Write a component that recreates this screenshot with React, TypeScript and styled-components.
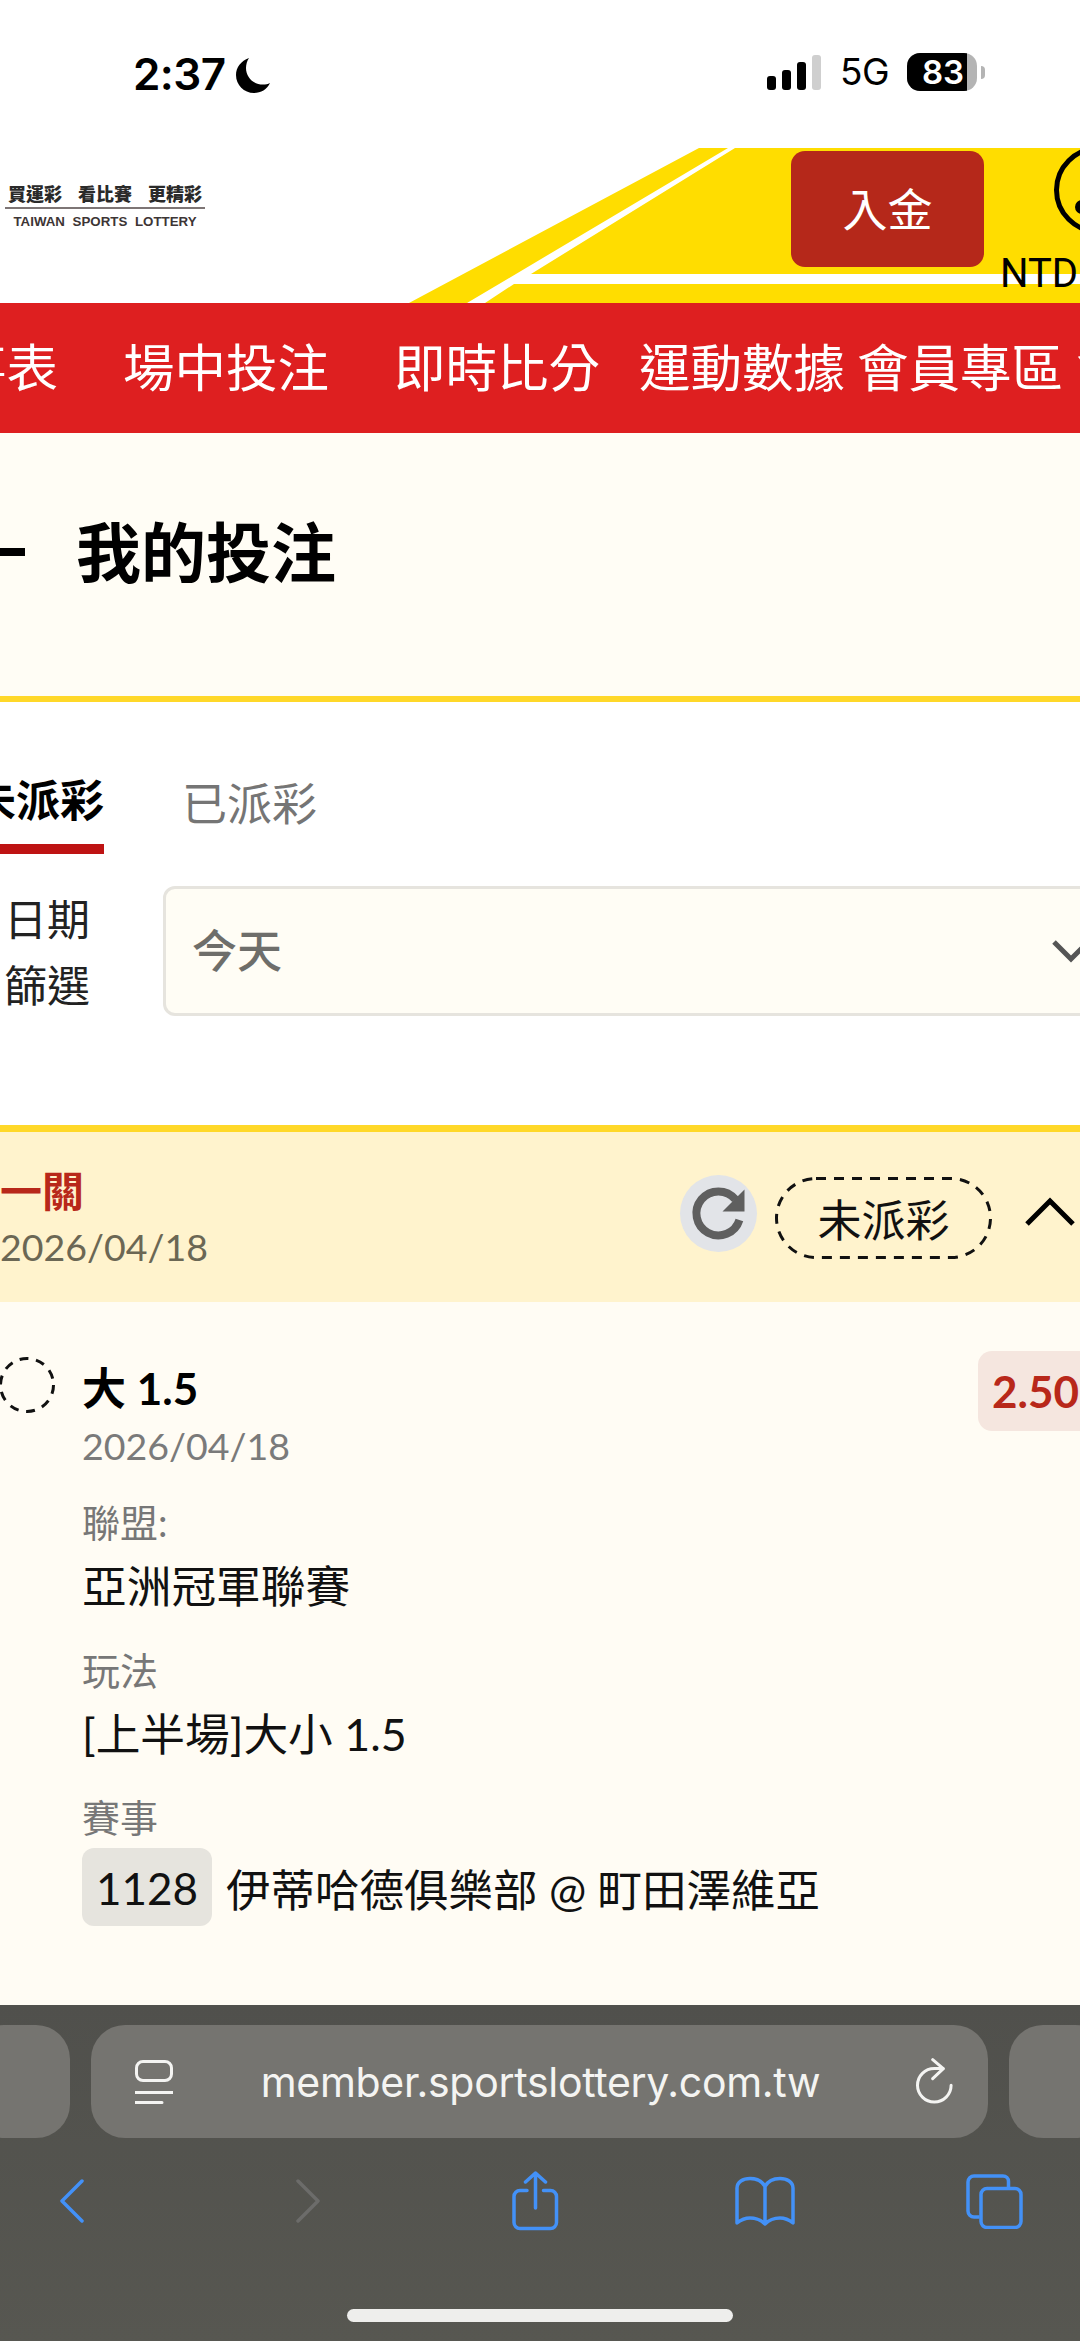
import React from "react";
import styled, { createGlobalStyle } from "styled-components";

const CJK = `"Lato", "Noto Sans CJK TC", sans-serif`;

const Global = createGlobalStyle`
  html, body { margin: 0; padding: 0; background: #fff; }
  * { box-sizing: border-box; }
`;

const Screen = styled.div`
  width: 1080px;
  height: 2341px;
  overflow: hidden;
  display: flex;
  flex-direction: column;
  background: #fff;
  font-family: ${CJK};
  color: #000;
`;

/* status bar */
const StatusBar = styled.div`
  height: 148px;
  flex: none;
  display: flex;
  align-items: flex-start;
  padding: 53px 0 0 133px;
`;
const Clock = styled.div`
  font-family: Inter, sans-serif;
  font-weight: 600;
  font-size: 44px;
  line-height: 42px;
  width: 103px;
  letter-spacing: -0.6px;
`;
const Moon = styled.svg`
  width: 34px;
  height: 36px;
  margin-top: 4px;
`;
const Signal = styled.div`
  margin-left: 497px;
  width: 54px;
  height: 35px;
  margin-top: 2px;
  display: flex;
  align-items: flex-end;
  gap: 6px;
`;
const SignalBar = styled.span<{ $h: number; $off?: boolean }>`
  width: 9px;
  height: ${(p) => p.$h}px;
  border-radius: 3px;
  background: ${(p) => (p.$off ? "#cfcfcf" : "#000")};
`;
const Network = styled.div`
  font-family: Inter, sans-serif;
  font-size: 37px;
  line-height: 38px;
  margin-left: 19px;
  width: 67px;
  letter-spacing: -0.5px;
`;
const Battery = styled.div`
  width: 70px;
  height: 38px;
  border-radius: 13px;
  overflow: hidden;
  display: flex;
  background: #b4b4b4;
`;
const BatteryFill = styled.div`
  width: 60px;
  padding-left: 12px;
  background: #000;
  color: #fff;
  font-family: Inter, sans-serif;
  font-weight: 600;
  font-size: 33px;
  line-height: 38px;
  text-align: center;
  white-space: nowrap;
`;
const BatteryNub = styled.div`
  width: 4px;
  height: 13px;
  margin: 13px 0 0 4px;
  border-radius: 0 4px 4px 0;
  background: #b4b4b4;
`;

/* site header */
const SiteHeader = styled.header`
  position: relative;
  height: 155px;
  flex: none;
  display: flex;
  align-items: flex-start;
  overflow: hidden;
  background: #fff;
`;
const Stripes = styled.svg`
  position: absolute;
  left: 0;
  top: 0;
`;
const Logo = styled.div`
  position: relative;
  width: 200px;
  margin: 35px 0 0 5px;
  flex: none;
  text-align: center;
`;
const Slogan = styled.div`
  display: flex;
  justify-content: space-between;
  padding: 0 3px 0 3px;
  font-family: "Noto Sans CJK TC", sans-serif;
  font-size: 18px;
  line-height: 20px;
  font-weight: 900;
  color: #2a2a2a;
`;
const LogoRule = styled.div`
  height: 2px;
  margin-top: 4px;
  background: #7d7575;
`;
const LogoLatin = styled.div`
  margin-top: 6px;
  font-family: "Liberation Sans", sans-serif;
  font-weight: 700;
  font-size: 13.300px;
  line-height: 14px;
  word-spacing: 4px;
  white-space: nowrap;
  color: #3d3535;
`;
const Deposit = styled.div`
  position: relative;
  flex: none;
  margin: 3px 0 0 586px;
  width: 193px;
  height: 116px;
  border-radius: 14px;
  background: #b5281a;
  color: #fff;
  font-family: "Noto Sans CJK TC", sans-serif;
  font-size: 45px;
  line-height: 114px;
  text-align: center;
`;
const Account = styled.div`
  position: relative;
  flex: none;
  width: 100px;
  margin-left: 16px;
`;
const Ring = styled.svg`
  display: block;
  width: 100px;
  height: 106px;
`;
const Currency = styled.div`
  font-family: Roboto, sans-serif;
  font-size: 40px;
  line-height: 40px;
`;

/* nav */
const Nav = styled.nav`
  height: 130px;
  flex: none;
  background: #de1f20;
  display: flex;
  align-items: center;
  color: #fff;
  font-family: "Noto Sans CJK TC", sans-serif;
  font-size: 51.500px;
  white-space: nowrap;
  padding-bottom: 8px;
`;
const NavItem = styled.span<{ $gap: number }>`
  flex: none;
  margin-left: ${(p) => p.$gap}px;
`;

/* page title */
const TitleRow = styled.div`
  height: 263px;
  flex: none;
  background: #fffdf5;
  display: flex;
  align-items: center;
  gap: 51px;
  padding-bottom: 31px;
`;
const TitleDash = styled.span`
  width: 25px;
  height: 8px;
  margin-top: 5px;
  background: #000;
`;
const Title = styled.h1`
  margin: 0;
  font-family: "Noto Sans CJK TC", sans-serif;
  font-size: 65px;
  line-height: 80px;
  font-weight: 700;
`;

const FilterPanel = styled.section`
  flex: none;
  height: 429px;
  border-top: 6px solid #ffd829;
  background: #fff;
`;
const Tabs = styled.div`
  display: flex;
  align-items: flex-start;
  gap: 78px;
  padding-top: 67px;
`;
const ActiveTab = styled.div`
  width: 104px;
  height: 85px;
  border-bottom: 10px solid #be1313;
  font-family: "Noto Sans CJK TC", sans-serif;
  font-size: 44px;
  font-weight: 700;
  line-height: 58px;
  white-space: nowrap;
  direction: rtl;
`;
const Tab = styled.div`
  margin-top: 3px;
  font-family: "Noto Sans CJK TC", sans-serif;
  font-size: 45px;
  line-height: 60px;
  color: #757575;
`;
const FilterRow = styled.div`
  display: flex;
  align-items: center;
  margin-top: 31px;
  padding-left: 4px;
`;
const FilterLabel = styled.div`
  width: 86px;
  flex: none;
  margin-top: -1px;
  font-family: "Noto Sans CJK TC", sans-serif;
  font-size: 43px;
  line-height: 66px;
  color: #222;
`;
const Select = styled.div`
  flex: none;
  width: 960px;
  height: 130px;
  margin-left: 73px;
  border: 3px solid #e6e4de;
  border-radius: 12px;
  background: #fffdf5;
  display: flex;
  align-items: center;
  padding-left: 26px;
  font-family: "Noto Sans CJK TC", sans-serif;
  font-size: 45px;
  font-weight: 500;
  color: #6e6e6a;
`;
const SelectValue = styled.span`
  margin-bottom: 4px;
`;
const SelectChevron = styled.svg`
  width: 40px;
  height: 24px;
  margin-left: auto;
  margin-right: 29px;
  flex: none;
`;

/* bet card */
const BetHeader = styled.div`
  flex: none;
  height: 177px;
  border-top: 7px solid #ffd829;
  background: #fff3cd;
  display: flex;
  justify-content: space-between;
  padding: 33px 5px 0 0;
`;
const BetKind = styled.div`
  font-family: "Noto Sans CJK TC", sans-serif;
  font-weight: 700;
  font-size: 42px;
  line-height: 48px;
  margin-bottom: 5px;
  color: #b8281a;
`;
const Muted = styled.div<{ $c?: string }>`
  font-size: 37.500px;
  line-height: 58px;
  color: ${(p) => p.$c ?? "#6b6754"};
`;
const HeaderActions = styled.div`
  display: flex;
  align-items: flex-start;
  margin-top: 10px;
`;
const RefreshButton = styled.div`
  width: 77px;
  height: 77px;
  border-radius: 50%;
  background: #e2e4e8;
`;
const StatusPill = styled.div`
  position: relative;
  width: 217px;
  height: 82px;
  margin: 2px 0 0 18px;
  display: flex;
  align-items: center;
  justify-content: center;
  font-family: "Noto Sans CJK TC", sans-serif;
  font-size: 44px;
  color: #111;
`;
const DashOutline = styled.svg`
  position: absolute;
  left: 0;
  top: 0;
`;
const CollapseIcon = styled.svg`
  width: 50px;
  height: 30px;
  margin: 22px 0 0 33px;
`;

const BetBody = styled.section`
  flex: none;
  height: 703px;
  background: #fffcf4;
  display: flex;
  align-items: flex-start;
  padding-top: 49px;
`;
const Marker = styled.div`
  position: relative;
  flex: none;
  width: 56px;
  height: 56px;
  margin: 6px 0 0 -1px;
`;
const Details = styled.div`
  flex: 1;
  margin-left: 27px;
`;
const Pick = styled.div`
  font-weight: 700;
  font-size: 44px;
  line-height: 74px;
  height: 75px;
`;
const DateLine = styled(Muted)`
  line-height: 40px;
`;
const Field = styled.div<{ $top: number }>`
  margin-top: ${(p) => p.$top}px;
`;
const FieldLabel = styled.div`
  font-size: 38px;
  line-height: 50px;
  margin-top: -2px;
  color: #777;
`;
const FieldValue = styled.div`
  font-size: 44.700px;
  line-height: 50px;
  margin-top: 14px;
  color: #111;
`;
const MatchRow = styled.div`
  display: flex;
  align-items: center;
  gap: 14px;
  margin-top: 6px;
  font-size: 44.500px;
  color: #111;
`;
const MatchNo = styled.span`
  width: 130px;
  height: 78px;
  border-radius: 12px;
  background: #e6e4de;
  font-size: 44px;
  line-height: 80px;
  text-align: center;
`;
const Odds = styled.div`
  flex: none;
  width: 140px;
  height: 80px;
  margin-right: -38px;
  padding-left: 14px;
  border-radius: 14px;
  background: #f5e6df;
  color: #b8281a;
  font-weight: 700;
  font-size: 44px;
  line-height: 80px;
`;

/* browser chrome */
const Browser = styled.footer`
  flex: 1;
  background: linear-gradient(#50504c, #575751);
  padding-top: 20px;
  display: flex;
  flex-direction: column;
`;
const AddressRow = styled.div`
  display: flex;
  gap: 21px;
  margin-left: -30px;
`;
const SidePill = styled.div`
  flex: none;
  width: 100px;
  height: 113px;
  border-radius: 34px;
  background: #757470;
`;
const AddressPill = styled.div`
  flex: none;
  width: 897px;
  height: 113px;
  border-radius: 34px;
  background: #757470;
  display: flex;
  align-items: center;
  justify-content: space-between;
  padding: 0 35px 0 44px;
  color: #f4f4f2;
`;
const Url = styled.div`
  font-family: Inter, sans-serif;
  font-size: 41px;
  letter-spacing: -0.3px;
  margin-right: 7px;
`;
const Toolbar = styled.div`
  display: grid;
  grid-template-columns: 236px 216px 223px 231px auto;
  align-items: center;
  height: 58px;
  margin-top: 33px;
  padding-left: 60px;
`;
const HomeBar = styled.div`
  width: 386px;
  height: 13px;
  margin: 80px auto 0;
  border-radius: 7px;
  background: #eeeeec;
`;

const BLUE = "#4391f7";

export default function App() {
  return (
    <Screen>
      <Global />
      <StatusBar>
        <Clock>2:37</Clock>
        <Moon viewBox="0 0 34 36">
          <path d="M13 1C5 4 0 10.500 0 18c0 10 8 18 18 18 7 0 13-3.500 16-10-2 1-4.500 1.500-7 1.500C17 27.500 10 20 10 11c0-3.500 1-7 3-10z" fill="#000" />
        </Moon>
        <Signal>
          <SignalBar $h={14} />
          <SignalBar $h={20} />
          <SignalBar $h={28} />
          <SignalBar $h={35} $off />
        </Signal>
        <Network>5G</Network>
        <Battery>
          <BatteryFill>83</BatteryFill>
        </Battery>
        <BatteryNub />
      </StatusBar>

      <SiteHeader>
        <Stripes width="1080" height="155" viewBox="0 0 1080 155">
          <path d="M699 0H728L467 155H409Z M735 0H1080V126H531Z M514 136H1080V155H485Z" fill="#ffdd00" />
        </Stripes>
        <Logo>
          <Slogan>
            <span>買運彩</span>
            <span>看比賽</span>
            <span>更精彩</span>
          </Slogan>
          <LogoRule />
          <LogoLatin>TAIWAN SPORTS LOTTERY</LogoLatin>
        </Logo>
        <Deposit>入金</Deposit>
        <Account>
          <Ring viewBox="0 0 100 106">
            <circle cx="98" cy="42" r="41.500" fill="none" stroke="#000" strokeWidth="5" />
            <circle cx="82" cy="59" r="7" fill="#000" />
          </Ring>
          <Currency>NTD</Currency>
        </Account>
      </SiteHeader>

      <Nav>
        <NavItem $gap={-45}>事表</NavItem>
        <NavItem $gap={65}>場中投注</NavItem>
        <NavItem $gap={65}>即時比分</NavItem>
        <NavItem $gap={39}>運動數據</NavItem>
        <NavItem $gap={12}>會員專區</NavItem>
        <NavItem $gap={13}>會</NavItem>
      </Nav>

      <TitleRow>
        <TitleDash />
        <Title>我的投注</Title>
      </TitleRow>

      <FilterPanel>
        <Tabs>
          <ActiveTab>未派彩</ActiveTab>
          <Tab>已派彩</Tab>
        </Tabs>
        <FilterRow>
          <FilterLabel>日期篩選</FilterLabel>
          <Select>
            <SelectValue>今天</SelectValue>
            <SelectChevron viewBox="0 0 40 24">
              <path d="M3 3l17 17L37 3" fill="none" stroke="#555" strokeWidth="5" />
            </SelectChevron>
          </Select>
        </FilterRow>
      </FilterPanel>

      <BetHeader>
        <div>
          <BetKind>一關</BetKind>
          <Muted>2026/04/18</Muted>
        </div>
        <HeaderActions>
          <RefreshButton>
            <svg width="77" height="77" viewBox="0 0 77 77">
              <path d="M55.400 24.400A22 22 0 1 0 59.400 45" fill="none" stroke="#5f5f5f" strokeWidth="8" />
              <path d="M64.500 14.500V36.500H42.500Z" fill="#5f5f5f" />
            </svg>
          </RefreshButton>
          <StatusPill>
            <DashOutline width="217" height="82" viewBox="0 0 217 82">
              <rect x="1.500" y="1.500" width="214" height="79" rx="39.500" fill="none" stroke="#111" strokeWidth="3" strokeDasharray="10 8" />
            </DashOutline>
            未派彩
          </StatusPill>
          <CollapseIcon viewBox="0 0 50 30">
            <path d="M2 27L25 4l23 23" fill="none" stroke="#000" strokeWidth="5" />
          </CollapseIcon>
        </HeaderActions>
      </BetHeader>

      <BetBody>
        <Marker>
          <DashOutline width="56" height="56" viewBox="0 0 56 56">
            <circle cx="28" cy="28" r="26.500" fill="none" stroke="#111" strokeWidth="3" strokeDasharray="9 7.650" />
          </DashOutline>
        </Marker>
        <Details>
          <Pick>大 1.5</Pick>
          <DateLine $c="#7a7a7a">2026/04/18</DateLine>
          <Field $top={33}>
            <FieldLabel>聯盟:</FieldLabel>
            <FieldValue>亞洲冠軍聯賽</FieldValue>
          </Field>
          <Field $top={36}>
            <FieldLabel>玩法</FieldLabel>
            <FieldValue>[上半場]大小 1.5</FieldValue>
          </Field>
          <Field $top={35}>
            <FieldLabel>賽事</FieldLabel>
            <MatchRow>
              <MatchNo>1128</MatchNo>
              <span>伊蒂哈德俱樂部 @ 町田澤維亞</span>
            </MatchRow>
          </Field>
        </Details>
        <Odds>2.50</Odds>
      </BetBody>

      <Browser>
        <AddressRow>
          <SidePill />
          <AddressPill>
            <svg width="38" height="46" viewBox="0 0 38 46" fill="none" stroke="#f4f4f2" strokeWidth="3">
              <rect x="1.500" y="2.500" width="35" height="19" rx="6.500" />
              <path d="M0 33.500H38M0 43.500H27" strokeLinecap="round" />
            </svg>
            <Url>member.sportslottery.com.tw</Url>
            <svg width="38" height="48" viewBox="0 0 38 48" fill="none" stroke="#f4f4f2" strokeWidth="3" strokeLinecap="round" strokeLinejoin="round">
              <path d="M28 10.500H19.300A16.800 16.800 0 1 0 36.100 27.300" />
              <path d="M17.700 1.700L28.300 10.700 17.700 20.700" />
            </svg>
          </AddressPill>
          <SidePill />
        </AddressRow>
        <Toolbar>
          <svg width="24" height="44" viewBox="0 0 24 44" fill="none" stroke={BLUE} strokeWidth="3.500" strokeLinecap="round" strokeLinejoin="round">
            <path d="M22 2L2 22l20 20" />
          </svg>
          <svg width="24" height="44" viewBox="0 0 24 44" fill="none" stroke="#6c6c6a" strokeWidth="3.500" strokeLinecap="round" strokeLinejoin="round">
            <path d="M2 2l20 20L2 42" />
          </svg>
          <svg width="47" height="60" viewBox="0 0 47 60" fill="none" stroke={BLUE} strokeWidth="3.500" strokeLinecap="round" strokeLinejoin="round">
            <path d="M15 19.500H8a6 6 0 0 0-6 6v26a6 6 0 0 0 6 6h30.500a6 6 0 0 0 6-6v-26a6 6 0 0 0-6-6H31.500" />
            <path d="M23.500 37V2M13.500 11l10-9 10 9" />
          </svg>
          <svg width="60" height="50" viewBox="0 0 60 50" fill="none" stroke={BLUE} strokeWidth="3.500" strokeLinecap="round" strokeLinejoin="round">
            <path d="M30 10.500C27 5 21 2.500 15 2.500C8 2.500 2 6 2 12V47C7 43 11 42 15 42C21 42 26 44 30 48C34 44 39 42 45 42C49 42 53 43 58 47V12C58 6 52 2.500 45 2.500C39 2.500 33 5 30 10.500ZM30 10.500V48" />
          </svg>
          <svg width="57" height="55" viewBox="0 0 57 55" fill="none" stroke={BLUE} strokeWidth="3.500" strokeLinejoin="round">
            <path d="M13.500 43H8a6 6 0 0 1-6-6V8a6 6 0 0 1 6-6H37a5.500 5.500 0 0 1 5.500 5.500V13" />
            <rect x="15" y="14.500" width="40" height="39" rx="6" />
          </svg>
        </Toolbar>
        <HomeBar />
      </Browser>
    </Screen>
  );
}
